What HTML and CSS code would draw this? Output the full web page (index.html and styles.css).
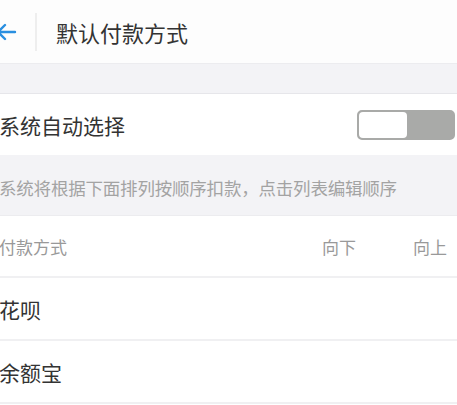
FILE: index.html
```html
<!DOCTYPE html>
<html lang="zh-CN">
<head>
    <meta charset="UTF-8">
    <meta name="viewport" content="width=device-width, initial-scale=1.0">
    <title>默认付款方式</title>
    <link rel="stylesheet" href="styles.css">
</head>
<body>
    <div class="topbar">
        <div class="back">
            <svg width="22" height="18" viewBox="0 0 22 18">
                <path d="M20 9H3M10 2L3 9l7 7" fill="none" stroke="#2a8fe0" stroke-width="2.4" stroke-linecap="round" stroke-linejoin="round"/>
            </svg>
        </div>
        <div class="title">默认付款方式</div>
    </div>

    <div class="gap"></div>

    <div class="row auto-row">
        <span class="label">系统自动选择</span>
        <div class="toggle">
            <div class="knob"></div>
        </div>
    </div>

    <div class="tip">系统将根据下面排列按顺序扣款，点击列表编辑顺序</div>

    <div class="row head-row">
        <span class="head-label">付款方式</span>
        <div class="head-actions">
            <span>向下</span>
            <span>向上</span>
        </div>
    </div>

    <div class="row item">
        <span class="label">花呗</span>
    </div>
    <div class="row item">
        <span class="label">余额宝</span>
    </div>
</body>
</html>
```

FILE: styles.css
```css
* {
    box-sizing: border-box;
    font-family: "Noto Sans CJK SC", "Noto Sans", sans-serif;
}

body {
    margin: 0;
    background-color: #ffffff;
    color: #333333;
}

.topbar {
    height: 64px;
    display: flex;
    align-items: center;
    background-color: #fdfdfd;
    border-bottom: 1px solid #ececef;
}

.back {
    width: 42px;
    height: 38px;
    display: flex;
    align-items: center;
    margin-left: -5px;
    border-right: 2px solid #eeeeee;
}

.back svg {
    display: block;
}

.title {
    margin-left: 19px;
    font-size: 22px;
    color: #333333;
}

.gap {
    height: 30px;
    background-color: #f3f3f6;
    border-bottom: 1px solid #e6e6ea;
}

.row {
    display: flex;
    align-items: center;
    justify-content: space-between;
    background-color: #ffffff;
    margin-left: -1px;
}

.label {
    font-size: 21px;
    color: #333333;
}

.auto-row {
    height: 61px;
    padding-right: 2px;
}

.toggle {
    width: 98px;
    height: 30px;
    border-radius: 5px;
    background-color: #a9aaa8;
    border: 2px solid #a9aaa8;
}

.knob {
    width: 48px;
    height: 26px;
    background-color: #ffffff;
    border-radius: 4px;
}

.tip {
    height: 61px;
    display: flex;
    align-items: center;
    padding-top: 5px;
    margin-left: -1px;
    background-color: #f3f3f6;
    color: #a3a3a3;
    font-size: 17.5px;
    letter-spacing: -0.2px;
    border-bottom: 1px solid #ececef;
}

.head-row {
    height: 62px;
    border-bottom: 2px solid #f0f0f2;
}

.head-label {
    font-size: 17px;
    color: #999999;
}

.head-actions {
    display: flex;
    gap: 57px;
    padding-right: 10px;
    font-size: 17px;
    color: #999999;
}

.item {
    height: 63px;
    border-bottom: 2px solid #f0f0f2;
}
```
